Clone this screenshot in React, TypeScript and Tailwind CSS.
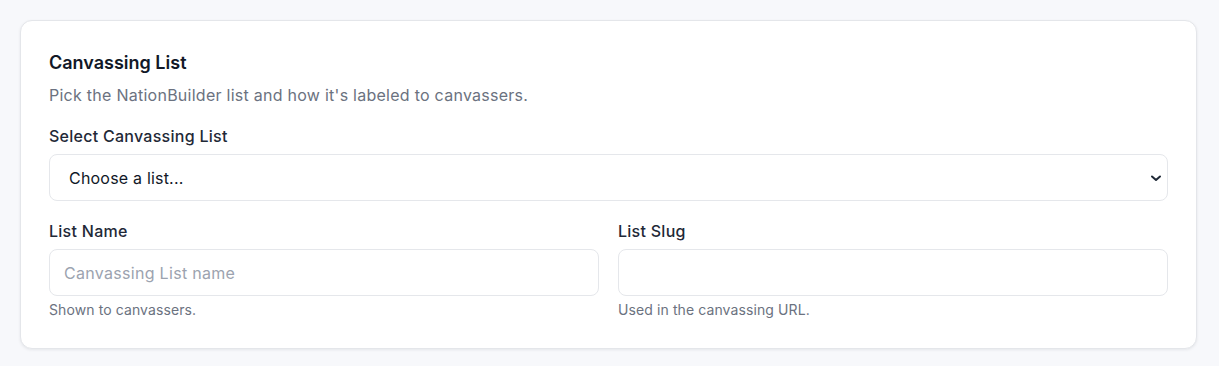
export default function App() {
    return (
        <div className="min-h-screen bg-[#f7f8fb] pb-5 pl-5 pr-[22px] pt-5" style={{ fontFamily: 'Inter, "Noto Sans", sans-serif' }}>
            <div className="rounded-xl border border-[#e4e6ea] bg-white p-7 shadow-[0_1px_3px_rgba(16,24,40,0.08)]">
                <h2 className="text-lg font-semibold leading-7 text-[#111827]">Canvassing List</h2>
                <p className="mt-1.5 text-base leading-6 tracking-[0.26px] text-[#6b7280]">Pick the NationBuilder list and how it's labeled to canvassers.</p>

                <div className="mt-[17px] flex flex-col gap-1.5">
                    <label className="text-base font-medium leading-6 tracking-[0.27px] text-[#1f2937]">Select Canvassing List</label>
                    <div className="relative">
                        <select className="h-[47px] w-full appearance-none rounded-lg border border-[#e5e7eb] bg-white px-[19px] text-base tracking-[0.2px] text-[#111827] outline-none" defaultValue="">
                            <option value="">Choose a list...</option>
                        </select>
                        <svg className="pointer-events-none absolute right-[4px] top-1/2 h-4 w-4 -translate-y-1/2" viewBox="0 0 16 16" fill="none">
                            <path d="M4 6.5 8 10l4-3.5" stroke="#1f2937" strokeWidth="2" strokeLinecap="round" strokeLinejoin="round" />
                        </svg>
                    </div>
                </div>

                <div className="mt-[18px] grid grid-cols-2 gap-[19px]">
                    <div className="flex flex-col">
                        <label className="text-base font-medium leading-6 tracking-[0.27px] text-[#1f2937]">List Name</label>
                        <input className="mt-1.5 h-[47px] w-full rounded-lg border border-[#e5e7eb] px-3.5 text-base tracking-[0.3px] text-[#111827] outline-none placeholder:text-[#9ca3af]" placeholder="Canvassing List name" />
                        <p className="mt-1 text-sm leading-5 tracking-[0.1px] text-[#6b7280]">Shown to canvassers.</p>
                    </div>
                    <div className="flex flex-col">
                        <label className="text-base font-medium leading-6 tracking-[0.27px] text-[#1f2937]">List Slug</label>
                        <input className="mt-1.5 h-[47px] w-full rounded-lg border border-[#e5e7eb] px-3.5 text-base tracking-[0.3px] text-[#111827] outline-none" />
                        <p className="mt-1 text-sm leading-5 tracking-[0.1px] text-[#6b7280]">Used in the canvassing URL.</p>
                    </div>
                </div>
            </div>
        </div>
    )
}
